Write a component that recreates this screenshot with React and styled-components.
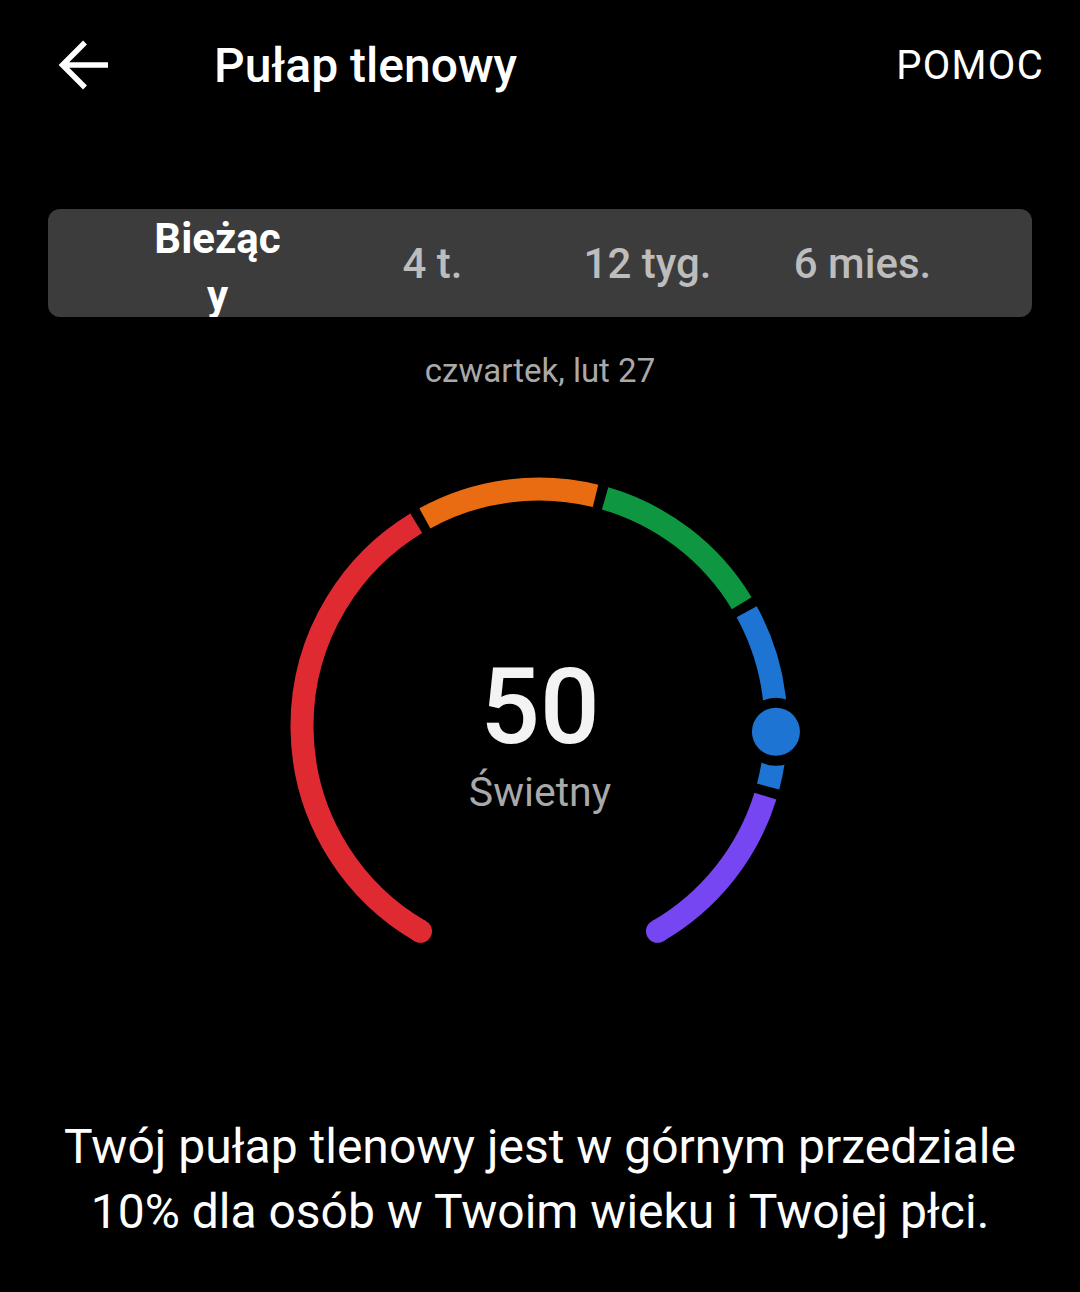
import styled, { createGlobalStyle } from "styled-components";

const GlobalStyle = createGlobalStyle`
  html, body {
    margin: 0;
    padding: 0;
    background: #000;
  }
  body {
    font-family: Roboto, "Noto Sans", sans-serif;
    color: #fff;
    min-height: 1292px;
  }
`

const Page = styled.div`
  width: 1080px;
  min-height: 1292px;
  background: #000;
  display: flex;
  flex-direction: column;
`

const Header = styled.header`
  height: 130px;
  display: flex;
  align-items: center;
  padding: 0 36px 0 48px;
`

const BackButton = styled.button`
  width: 72px;
  height: 72px;
  padding: 0;
  border: 0;
  background: none;
  display: flex;
  align-items: center;
  justify-content: center;
`

const Title = styled.h1`
  margin: 0 0 0 94px;
  flex: 1;
  font-size: 48px;
  font-weight: 500;
  color: #fff;
`

const HelpLink = styled.a`
  font-size: 40px;
  font-weight: 400;
  letter-spacing: 1.3px;
  color: #fff;
  text-decoration: none;
`

const Tabs = styled.div`
  margin: 79px 48px 0;
  height: 108px;
  padding: 0 62px;
  background: #3c3c3c;
  border-radius: 12px;
  overflow: hidden;
  display: grid;
  grid-template-columns: repeat(4, 1fr);
  grid-template-rows: 108px;
`

const Tab = styled.div`
  height: 108px;
  box-sizing: border-box;
  display: flex;
  align-items: center;
  justify-content: center;
  text-align: center;
  padding: ${(p) => (p.$active ? "8px 36px 0" : "0 36px")};
  font-size: 42px;
  line-height: 57px;
  overflow-wrap: anywhere;
  font-weight: ${(p) => (p.$active ? 700 : 500)};
  color: ${(p) => (p.$active ? "#fff" : "#bdbdbd")};
`

const DateLabel = styled.div`
  margin-top: 34px;
  text-align: center;
  font-size: 33px;
  color: #a9a9a9;
`

const GaugeWrap = styled.div`
  position: relative;
  width: 540px;
  height: 540px;
  margin: 66px auto 0;
`

const Readout = styled.div`
  position: absolute;
  top: 199px;
  left: 0;
  right: 0;
  display: flex;
  flex-direction: column;
  align-items: center;
  gap: 8px;
`

const Value = styled.div`
  font-size: 105px;
  line-height: 105px;
  font-weight: 500;
  color: #f3f3f3;
`

const Rating = styled.div`
  font-size: 41px;
  line-height: 1.2;
  color: #a9a9a9;
`

const Summary = styled.p`
  margin: 118px 0 0;
  padding: 0 30px;
  text-align: center;
  font-size: 48px;
  line-height: 65px;
  color: #fff;
`

const CX = 269;
const CY = 270;
const R = 237;
const STROKE = 23;
const GAP = 1.2;

const point = (deg) => {
  const a = (deg * Math.PI) / 180;
  return [CX + R * Math.sin(a), CY - R * Math.cos(a)];
};

const arc = (from, to) => {
  const [x1, y1] = point(from);
  const [x2, y2] = point(to);
  const large = to - from > 180 ? 1 : 0;
  return `M${x1} ${y1} A${R} ${R} 0 ${large} 1 ${x2} ${y2}`;
};

const segments = [
  { from: -150, to: -30 - GAP, color: "#e02a32" },
  { from: -30 + GAP, to: 15 - GAP, color: "#e96b12" },
  { from: 15 + GAP, to: 60 - GAP, color: "#0e9641" },
  { from: 60 + GAP, to: 106 - GAP, color: "#1d74d3" },
  { from: 106 + GAP, to: 150, color: "#7546f2" },
];

function Gauge({ value }) {
  const [sx, sy] = point(-150);
  const [ex, ey] = point(150);
  const [dx, dy] = point(value);
  return (
    <svg width="540" height="540" viewBox="0 0 540 540">
      {segments.map((s) => (
        <path key={s.from} d={arc(s.from, s.to)} fill="none" stroke={s.color} strokeWidth={STROKE} />
      ))}
      <circle cx={sx} cy={sy} r={STROKE / 2} fill="#e02a32" />
      <circle cx={ex} cy={ey} r={STROKE / 2} fill="#7546f2" />
      <circle cx={dx} cy={dy} r="34" fill="#000" />
      <circle cx={dx} cy={dy} r="24" fill="#1d74d3" />
    </svg>
  );
}

export default function App() {
  const tabs = ["Bieżący", "4 t.", "12 tyg.", "6 mies."];
  return (
    <Page>
      <GlobalStyle />
      <Header>
        <BackButton aria-label="Wstecz">
          <svg width="72" height="72" viewBox="0 0 72 72">
            <path d="M60 36 H15 M37 13.5 L14.5 36 L37 58.5" fill="none" stroke="#fff" strokeWidth="5.5" />
          </svg>
        </BackButton>
        <Title>Pułap tlenowy</Title>
        <HelpLink href="#">POMOC</HelpLink>
      </Header>
      <Tabs>
        {tabs.map((t, i) => (
          <Tab key={t} $active={i === 0}>{t}</Tab>
        ))}
      </Tabs>
      <DateLabel>czwartek, lut 27</DateLabel>
      <GaugeWrap>
        <Gauge value={91.4} />
        <Readout>
          <Value>50</Value>
          <Rating>Świetny</Rating>
        </Readout>
      </GaugeWrap>
      <Summary>
        Twój pułap tlenowy jest w górnym przedziale 10% dla osób w Twoim wieku i Twojej płci.
      </Summary>
    </Page>
  );
}
